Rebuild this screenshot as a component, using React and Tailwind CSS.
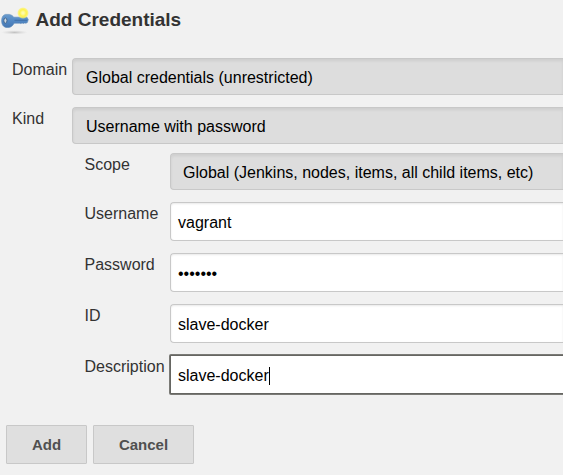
const SELECT =
  'flex h-[37px] flex-1 items-center rounded-l-[4px] border border-r-0 border-[#c8c8c8] bg-[#dddddd] pt-[3px] text-black shadow-[inset_0_2px_3px_rgba(0,0,0,0.07)]';
const INPUT =
  'flex h-[39px] flex-1 items-center rounded-l-[4px] border border-r-0 border-[#c8c8c8] bg-white pl-[7px] pt-[3px] text-black shadow-[inset_0_1px_2px_rgba(0,0,0,0.09)]';

function KeyIcon() {
  return (
    <svg className="h-9 w-8 shrink-0" viewBox="0 0 32 36">
      <defs>
        <linearGradient id="key" x1="0" y1="0" x2="0" y2="1">
          <stop offset="0" stopColor="#6a9bcd" />
          <stop offset="0.5" stopColor="#5288c4" />
          <stop offset="1" stopColor="#4676b0" />
        </linearGradient>
        <radialGradient id="glow">
          <stop offset="0" stopColor="#fffcc0" />
          <stop offset="0.3" stopColor="#fff98a" />
          <stop offset="0.55" stopColor="#fff24a" />
          <stop offset="0.8" stopColor="#fff45c" stopOpacity="0.75" />
          <stop offset="1" stopColor="#fff680" stopOpacity="0" />
        </radialGradient>
        <radialGradient id="shade">
          <stop offset="0" stopColor="#aaa" stopOpacity="0.7" />
          <stop offset="1" stopColor="#ccc" stopOpacity="0" />
        </radialGradient>
      </defs>
      <ellipse cx="14.5" cy="32.4" rx="13.5" ry="2.2" fill="url(#shade)" />
      <path
        d="M5.5 14.4h3.8c2.1.4 3.6 1.6 4.6 2.8h13l1.4 2.4-1 3-1.4.6-1.2-.3-1.2.6-1.4-.4-1.3.5-1.4-.4h-5.3c-1 2.2-2.8 4-5.2 4.3H6C3.3 27 1.6 24.5 1.6 20.8s1.5-6 3.9-6.4z"
        fill="url(#key)"
        stroke="#5d89b8"
        strokeWidth="0.6"
      />
      <path d="M14.5 20.3h12.7" stroke="#3f6ca4" strokeWidth="0.9" />
      <ellipse cx="5.4" cy="20.6" rx="1.6" ry="2.6" fill="#ccd7e1" stroke="#46678c" strokeWidth="1" />
      <circle cx="23" cy="13" r="6" fill="url(#glow)" />
    </svg>
  );
}

function Row({ label, nested, children }) {
  return (
    <div className="flex">
      <div className={nested ? '-ml-[0.5px] w-[85.5px] shrink-0 text-[#333]' : 'w-[60px] shrink-0 text-[#333]'}>{label}</div>
      {children}
    </div>
  );
}

export default function App() {
  return (
    <div className="h-[475px] w-[563px] overflow-hidden bg-[#f1f1f1] font-['Liberation_Sans',Arial,sans-serif] text-base leading-6">
      <header className="flex h-[58px] items-start gap-[3.5px]">
        <KeyIcon />
        <h1 className="pt-2 text-[19px] font-bold leading-6 text-[#333]">Add Credentials</h1>
      </header>
      <form>
        <div className="flex flex-col gap-3 pl-3">
          <Row label="Domain">
            <div className={`${SELECT} pl-[13px]`}>Global credentials (unrestricted)</div>
          </Row>
          <Row label="Kind">
            <div className={`${SELECT} pl-[13px]`}>Username with password</div>
          </Row>
        </div>
        <div className="flex flex-col gap-3 pl-[85px] pt-[9px]">
          <Row nested label="Scope">
            <div className={`${SELECT} pl-3`}>Global (Jenkins, nodes, items, all child items, etc)</div>
          </Row>
          <Row nested label="Username">
            <div className={INPUT}>vagrant</div>
          </Row>
          <Row nested label="Password">
            <div className={INPUT}>•••••••</div>
          </Row>
          <Row nested label="ID">
            <div className={INPUT}>slave-docker</div>
          </Row>
          <Row nested label="Description">
            <div className="flex h-[39px] flex-1 items-center rounded-l-[1px] border border-r-0 border-[#666662] bg-white pl-[7px] pt-[3px] text-black ring-1 ring-[#7a7a76]">
              slave-docker
              <span className="-mt-px h-[18px] w-px bg-black" />
            </div>
          </Row>
        </div>
        <div className="flex gap-1.5 pl-1.5 pt-[31px] text-[15px] font-bold text-[#505050]">
          <button type="button" className="h-[39px] w-[81px] rounded-[1px] border border-[#c8c8c8] bg-[#dfdfdf]">
            Add
          </button>
          <button type="button" className="h-[39px] w-[101px] rounded-[1px] border border-[#c8c8c8] bg-[#dfdfdf]">
            Cancel
          </button>
        </div>
      </form>
    </div>
  );
}
